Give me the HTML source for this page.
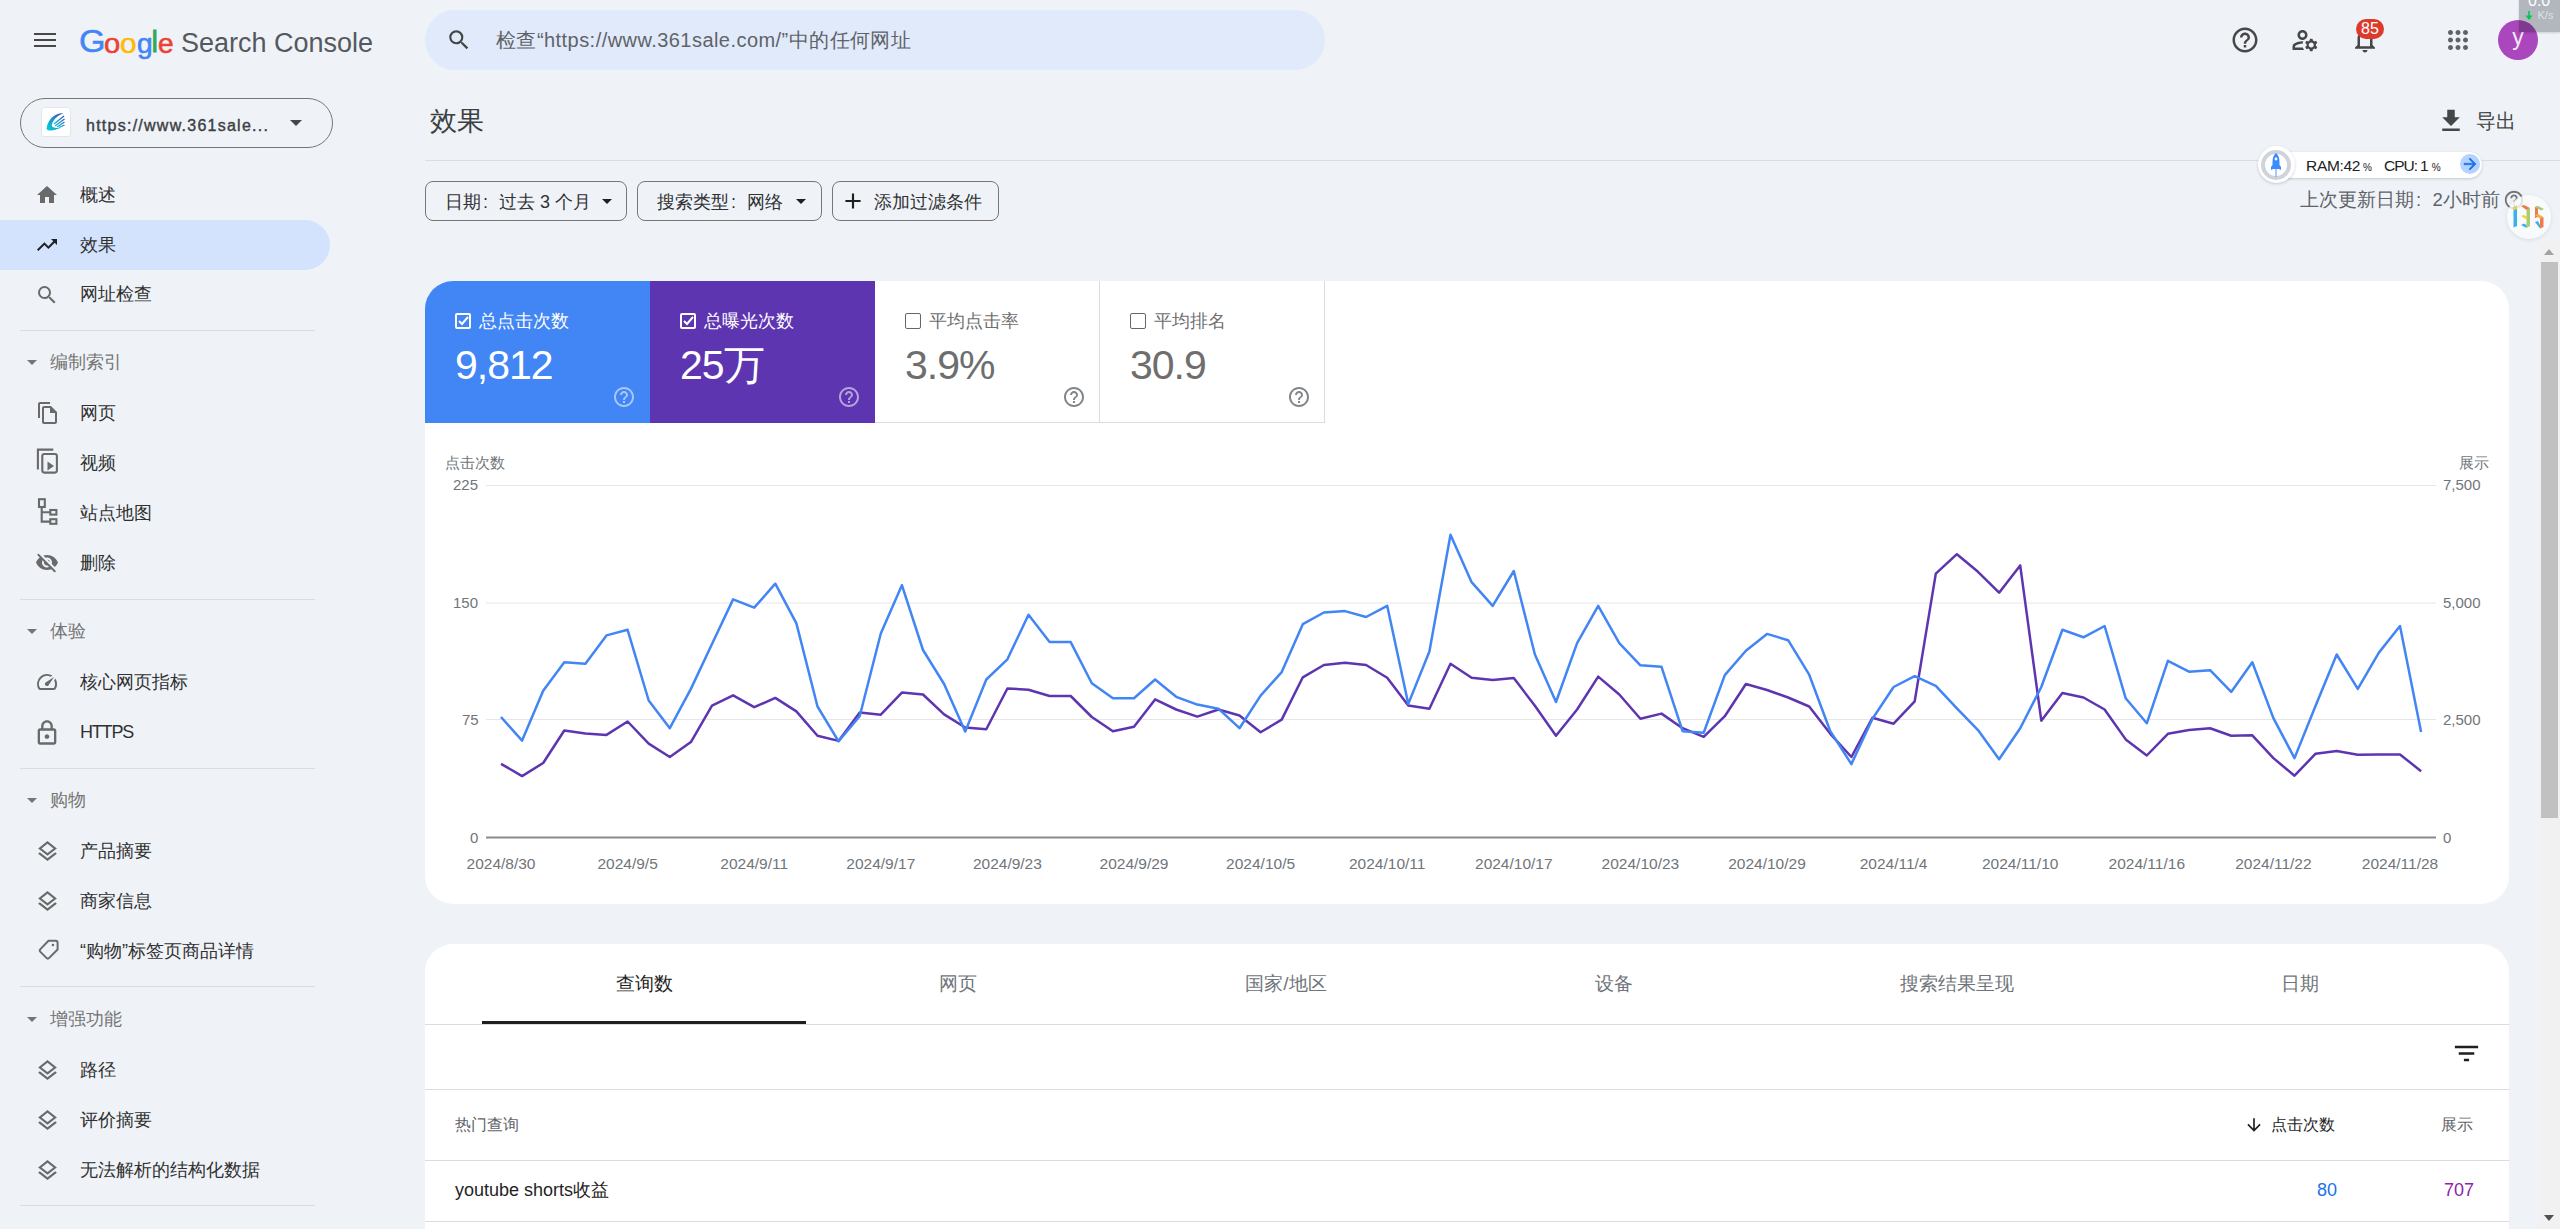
<!DOCTYPE html>
<html><head><meta charset="utf-8">
<style>
*{box-sizing:border-box;margin:0;padding:0}
html,body{width:2560px;height:1229px;overflow:hidden}
body{background:#eff3f8;font-family:"Liberation Sans",sans-serif;color:#1f1f1f;position:relative}
.a{position:absolute;white-space:nowrap}
.nav{position:absolute;left:80px;font-size:18px;color:#303030;line-height:20px}
.ico{position:absolute}
.sec{position:absolute;left:50px;font-size:18px;color:#757575;line-height:20px}
.div{position:absolute;left:20px;width:295px;height:1px;background:#dadce0}
.chip{position:absolute;top:181px;height:40px;border:1px solid #747775;border-radius:8px;font-size:18px;color:#303134;line-height:38px}
.tile{position:absolute;top:281px;width:225px;height:142px}
.tlab{position:absolute;left:54px;top:30px;font-size:18px;line-height:20px}
.tval{position:absolute;left:30px;top:60px;font-size:41px;line-height:48px;letter-spacing:-1px}
.cb{position:absolute;left:30px;top:32px;width:16px;height:16px;border:2px solid #fff;border-radius:2px}
.help{position:absolute;left:187px;top:104px;width:24px;height:24px}
.ylab{position:absolute;font-size:15px;color:#70757a;line-height:16px}
.xlab{position:absolute;top:856px;font-size:15.5px;color:#70757a;line-height:16px;transform:translateX(-50%)}
.tab{position:absolute;top:973px;font-size:19px;color:#70757a;line-height:22px;transform:translateX(-50%)}
</style></head><body>

<!-- header -->
<svg class="ico" style="left:34px;top:32px" width="22" height="16" viewBox="0 0 22 16"><rect x="0" y="1" width="22" height="2" fill="#474747"/><rect x="0" y="7" width="22" height="2" fill="#474747"/><rect x="0" y="13" width="22" height="2" fill="#474747"/></svg>
<div class="a" style="left:78.5px;top:22px;font-size:31px;line-height:40px;transform:scaleX(1.1);transform-origin:0 0;color:#4285f4;-webkit-text-stroke:0.5px #4285f4">G</div><div class="a" style="left:104px;top:24px;font-size:27px;transform:scaleX(1.08);transform-origin:0 0;line-height:40px;color:#ea4335;-webkit-text-stroke:0.6px #ea4335">o</div><div class="a" style="left:120px;top:24px;font-size:27px;transform:scaleX(1.1);transform-origin:0 0;line-height:40px;color:#fbbc05;-webkit-text-stroke:0.6px #fbbc05">o</div><div class="a" style="left:136.5px;top:24px;font-size:27px;transform:scaleX(1.04);transform-origin:0 0;line-height:40px;color:#4285f4;-webkit-text-stroke:0.6px #4285f4">g</div><div class="a" style="left:151.5px;top:22px;font-size:29px;line-height:40px;color:#34a853;-webkit-text-stroke:0.8px #34a853">l</div><div class="a" style="left:158px;top:24px;font-size:27px;transform:scaleX(1.04);transform-origin:0 0;line-height:40px;color:#ea4335;-webkit-text-stroke:0.6px #ea4335">e</div>
<div class="a" style="left:181px;top:23px;font-size:27px;line-height:40px;color:#55595e">Search Console</div>

<div class="a" style="left:425px;top:10px;width:900px;height:60px;border-radius:30px;background:#e1eafb"></div>
<svg class="ico" style="left:446px;top:27px" width="26" height="26" viewBox="0 0 24 24"><path fill="#444746" d="M15.5 14h-.79l-.28-.27A6.47 6.47 0 0 0 16 9.5 6.5 6.5 0 1 0 9.5 16c1.61 0 3.09-.59 4.23-1.57l.27.28v.79l5 4.99L20.49 19l-4.99-5zm-6 0C7.01 14 5 11.99 5 9.5S7.01 5 9.5 5 14 7.01 14 9.5 11.99 14 9.5 14z"/></svg>
<div class="a" style="left:496px;top:29px;font-size:20px;line-height:22px;letter-spacing:0.45px;color:#5f6368">检查“https://www.361sale.com/”中的任何网址</div>

<!-- top right icons -->
<svg class="ico" style="left:2230px;top:25px" width="30" height="30" viewBox="0 0 24 24"><path fill="#474747" d="M11 18h2v-2h-2v2zm1-16C6.48 2 2 6.48 2 12s4.48 10 10 10 10-4.48 10-10S17.52 2 12 2zm0 18c-4.41 0-8-3.59-8-8s3.59-8 8-8 8 3.59 8 8-3.59 8-8 8zm0-14c-2.21 0-4 1.79-4 4h2c0-1.1.9-2 2-2s2 .9 2 2c0 2-3 1.75-3 5h2c0-2.25 3-2.5 3-5 0-2.21-1.79-4-4-4z"/></svg>
<svg class="ico" style="left:2290px;top:25px" width="30" height="30" viewBox="0 0 24 24"><path fill="#474747" d="M4 18v-.65c0-.34.16-.66.41-.81C6.1 15.53 8.03 15 10 15c.03 0 .05 0 .08.01.1-.7.3-1.37.59-1.98-.22-.02-.44-.03-.67-.03-2.42 0-4.68.67-6.61 1.82-.88.52-1.39 1.5-1.39 2.53V20h9.26c-.42-.6-.75-1.28-.97-2H4zM10 12c2.21 0 4-1.79 4-4s-1.79-4-4-4-4 1.79-4 4 1.79 4 4 4zm0-6c1.1 0 2 .9 2 2s-.9 2-2 2-2-.9-2-2 .9-2 2-2zM20.75 16c0-.22-.03-.42-.06-.63l1.14-1.01-1-1.73-1.45.49c-.32-.27-.68-.48-1.08-.63L18 11h-2l-.3 1.49c-.4.15-.76.36-1.08.63l-1.45-.49-1 1.73 1.14 1.01c-.03.21-.06.41-.06.63s.03.42.06.63l-1.14 1.01 1 1.73 1.45-.49c.32.27.68.48 1.08.63L16 21h2l.3-1.49c.4-.15.76-.36 1.08-.63l1.45.49 1-1.73-1.14-1.01c.03-.21.06-.41.06-.63zM17 18c-1.1 0-2-.9-2-2s.9-2 2-2 2 .9 2 2-.9 2-2 2z"/></svg>
<svg class="ico" style="left:2350px;top:25px" width="30" height="30" viewBox="0 0 24 24"><path fill="#474747" d="M12 22c1.1 0 2-.9 2-2h-4c0 1.1.89 2 2 2zm6-6v-5c0-3.07-1.64-5.64-4.5-6.32V4c0-.83-.67-1.5-1.5-1.5s-1.5.67-1.5 1.5v.68C7.63 5.36 6 7.92 6 11v5l-2 2v1h16v-1l-2-2zm-2 1H8v-6c0-2.48 1.51-4.5 4-4.5s4 2.02 4 4.5v6z"/></svg>
<div class="a" style="left:2356px;top:19px;width:28px;height:20px;border-radius:10px;background:#dc3b2c;color:#fff;font-size:16px;line-height:20px;text-align:center">85</div>
<svg class="ico" style="left:2443px;top:25px" width="30" height="30" viewBox="0 0 24 24"><path fill="#5f6368" d="M6 8c1.1 0 2-.9 2-2s-.9-2-2-2-2 .9-2 2 .9 2 2 2zm6 12c1.1 0 2-.9 2-2s-.9-2-2-2-2 .9-2 2 .9 2 2 2zm-6 0c1.1 0 2-.9 2-2s-.9-2-2-2-2 .9-2 2 .9 2 2 2zm0-6c1.1 0 2-.9 2-2s-.9-2-2-2-2 .9-2 2 .9 2 2 2zm6 0c1.1 0 2-.9 2-2s-.9-2-2-2-2 .9-2 2 .9 2 2 2zm6-10c-1.1 0-2 .9-2 2s.9 2 2 2 2-.9 2-2-.9-2-2-2zm-6 4c1.1 0 2-.9 2-2s-.9-2-2-2-2 .9-2 2 .9 2 2 2zm6 6c1.1 0 2-.9 2-2s-.9-2-2-2-2 .9-2 2 .9 2 2 2zm0 6c1.1 0 2-.9 2-2s-.9-2-2-2-2 .9-2 2 .9 2 2 2z"/></svg>
<div class="a" style="left:2498px;top:20px;width:40px;height:40px;border-radius:20px;background:#ab47bc;color:#f4e8f6;font-size:23px;line-height:34px;text-align:center">y</div>
<div class="a" style="left:2519px;top:0;width:41px;height:32px;background:rgba(15,20,30,.27);box-shadow:0 1px 2px rgba(0,0,0,.15)"></div><div class="a" style="left:2528px;top:-7px;font-size:16px;line-height:16px;color:#fff">0.0</div><svg class="ico" style="left:2524.5px;top:11px" width="8" height="9" viewBox="0 0 8 9"><path d="M3.2 0h1.6v4.5h2.7L4 9 0.5 4.5h2.7z" fill="#00c853"/></svg><div class="a" style="left:2537.5px;top:10px;font-size:11px;line-height:11px;color:#dfe1e5">K/s</div>

<!-- sidebar -->
<div class="a" style="left:20px;top:98px;width:313px;height:50px;border:1px solid #747775;border-radius:25px"></div>
<div class="a" style="left:41px;top:107px;width:30px;height:30px;background:#fff;border:1px solid #e6e6e6;border-radius:3px"></div>
<svg class="ico" style="left:41px;top:107px" width="29" height="29" viewBox="0 0 29 29"><defs><linearGradient id="fg" x1="0" y1="1" x2="1" y2="0"><stop offset="0" stop-color="#00d8d8"/><stop offset="1" stop-color="#3a4db8"/></linearGradient></defs><path d="M22.5 6.2 C14 5.5 7 12 5.5 21.5 C5.8 23.8 9 23.8 12 23.2 C15 22.6 17.5 21.8 19.5 20.8 C14.5 21.2 10.5 20.8 10.8 18 C12 12.5 16.5 8.5 22.5 6.2 Z" fill="url(#fg)"/><path d="M13 17 L23 9 M14 19 L23.5 12 M16 20 L23.5 15 M18 20.5 L23.5 18" stroke="url(#fg)" stroke-width="1.3" fill="none"/></svg>
<div class="a" style="left:86px;top:115.5px;font-size:16px;line-height:20px;color:#3c4043;letter-spacing:1.25px;-webkit-text-stroke:0.4px #3c4043">https://www.361sale...</div>
<svg class="ico" style="left:289px;top:119px" width="14" height="8" viewBox="0 0 14 8"><path d="M1 1h12L7 7z" fill="#474747"/></svg>

<div class="a" style="left:0;top:220px;width:330px;height:50px;border-radius:0 25px 25px 0;background:#d3e3fd"></div>

<svg class="ico" style="left:35px;top:183px" width="24" height="24" viewBox="0 0 24 24"><path fill="#6a6a6a" d="M10 20v-6h4v6h5v-8h3L12 3 2 12h3v8z"/></svg>
<div class="nav" style="top:185px">概述</div>
<svg class="ico" style="left:35px;top:233px" width="24" height="24" viewBox="0 0 24 24"><path fill="#1f1f1f" d="M16 6l2.29 2.29-4.88 4.88-4-4L2 16.59 3.41 18l6-6 4 4 6.3-6.29L22 12V6z"/></svg>
<div class="nav" style="top:235px">效果</div>
<svg class="ico" style="left:35px;top:283px" width="24" height="24" viewBox="0 0 24 24"><path fill="#6a6a6a" d="M15.5 14h-.79l-.28-.27A6.47 6.47 0 0 0 16 9.5 6.5 6.5 0 1 0 9.5 16c1.61 0 3.09-.59 4.23-1.57l.27.28v.79l5 4.99L20.49 19l-4.99-5zm-6 0C7.01 14 5 11.99 5 9.5S7.01 5 9.5 5 14 7.01 14 9.5 11.99 14 9.5 14z"/></svg>
<div class="nav" style="top:284px">网址检查</div>
<div class="div" style="top:330px"></div>

<svg class="ico" style="left:26px;top:359px" width="12" height="7" viewBox="0 0 12 7"><path d="M1 1h10L6 6z" fill="#757575"/></svg>
<div class="sec" style="top:352px">编制索引</div>
<svg class="ico" style="left:35px;top:401px" width="24" height="24" viewBox="0 0 24 24"><path fill="#6a6a6a" d="M15 1H5c-1.1 0-2 .9-2 2v14h2V3h10V1zm1 4H9c-1.1 0-2 .9-2 2v14c0 1.1.9 2 2 2h11c1.1 0 2-.9 2-2V11l-6-6zm4 16H9V7h6v5h5v9z"/></svg>
<div class="nav" style="top:403px">网页</div>
<svg class="ico" style="left:35px;top:447px" width="24" height="28" viewBox="0 0 24 28"><path d="M2.9 22.5V2.6H18.3" fill="none" stroke="#6a6a6a" stroke-width="2.1"/><rect x="7.3" y="7" width="14.6" height="18.6" rx="2" fill="none" stroke="#6a6a6a" stroke-width="2.1"/><path d="M12.5 14.5L19 19L12.5 23.5Z" fill="#6a6a6a"/></svg>
<div class="nav" style="top:453px">视频</div>
<svg class="ico" style="left:35px;top:495px" width="24" height="32" viewBox="0 0 24 32"><g fill="none" stroke="#6a6a6a" stroke-width="2.1"><rect x="4" y="4.2" width="5.8" height="7.8"/><rect x="15.3" y="15" width="6.1" height="4.6"/><rect x="15.3" y="24.2" width="6.1" height="4.6"/><path d="M6.7 12V26.6H15.3M6.7 17.3H15.3"/></g></svg>
<div class="nav" style="top:503px">站点地图</div>
<svg class="ico" style="left:35px;top:551px" width="24" height="24" viewBox="0 0 24 24"><path fill="#6a6a6a" d="M12 6.5c2.76 0 5 2.24 5 5 0 .51-.1 1-.24 1.46l3.06 3.06c1.39-1.23 2.49-2.77 3.18-4.53C21.27 7.11 17 4 12 4c-1.27 0-2.49.2-3.64.57l2.17 2.17c.47-.14.96-.24 1.47-.24zM2.71 3.16a.996.996 0 0 0 0 1.41l1.97 1.97A11.892 11.892 0 0 0 1 11.5C2.73 15.89 7 19 12 19c1.52 0 2.97-.3 4.31-.82l2.72 2.72a.996.996 0 1 0 1.41-1.41L4.13 3.16c-.39-.39-1.03-.39-1.42 0zM12 16.5c-2.76 0-5-2.24-5-5 0-.77.18-1.5.49-2.14l1.57 1.57c-.03.18-.06.37-.06.57 0 1.66 1.34 3 3 3 .2 0 .38-.03.57-.07L14.14 16c-.65.32-1.37.5-2.14.5zm2.97-5.33a2.97 2.97 0 0 0-2.64-2.64l2.64 2.64z"/></svg>
<div class="nav" style="top:553px">删除</div>
<div class="div" style="top:599px"></div>

<svg class="ico" style="left:26px;top:628px" width="12" height="7" viewBox="0 0 12 7"><path d="M1 1h10L6 6z" fill="#757575"/></svg>
<div class="sec" style="top:621px">体验</div>
<svg class="ico" style="left:35px;top:670px" width="24" height="24" viewBox="0 0 24 24"><path fill="#6a6a6a" d="M20.38 8.57l-1.23 1.85a8 8 0 0 1-.22 7.58H5.07A8 8 0 0 1 15.58 6.85l1.85-1.23A10 10 0 0 0 3.35 19a2 2 0 0 0 1.72 1h13.85a2 2 0 0 0 1.74-1 10 10 0 0 0-.27-10.44zm-9.79 6.84a2 2 0 0 0 2.83 0l5.66-8.49-8.49 5.66a2 2 0 0 0 0 2.83z"/></svg>
<div class="nav" style="top:672px">核心网页指标</div>
<svg class="ico" style="left:33px;top:719px" width="28" height="28" viewBox="0 0 24 24"><path fill="#6a6a6a" d="M18 8h-1V6c0-2.76-2.24-5-5-5S7 3.24 7 6v2H6c-1.1 0-2 .9-2 2v10c0 1.1.9 2 2 2h12c1.1 0 2-.9 2-2V10c0-1.1-.9-2-2-2zM9 6c0-1.66 1.34-3 3-3s3 1.34 3 3v2H9V6zm9 14H6V10h12v10zm-6-3c1.1 0 2-.9 2-2s-.9-2-2-2-2 .9-2 2 .9 2 2 2z"/></svg>
<div class="nav" style="top:722px;letter-spacing:-1.2px">HTTPS</div>
<div class="div" style="top:768px"></div>

<svg class="ico" style="left:26px;top:797px" width="12" height="7" viewBox="0 0 12 7"><path d="M1 1h10L6 6z" fill="#757575"/></svg>
<div class="sec" style="top:790px">购物</div>
<svg class="ico" style="left:35.4px;top:839px" width="25" height="25" viewBox="0 0 24 24"><path fill="#6a6a6a" d="M11.99 18.54l-7.37-5.73L3 14.07l9 7 9-7-1.63-1.27-7.38 5.74zM12 16l7.36-5.73L21 9l-9-7-9 7 1.63 1.27L12 16zm0-11.47L17.74 9 12 13.47 6.26 9 12 4.53z"/></svg>
<div class="nav" style="top:841px">产品摘要</div>
<svg class="ico" style="left:35.4px;top:889px" width="25" height="25" viewBox="0 0 24 24"><path fill="#6a6a6a" d="M11.99 18.54l-7.37-5.73L3 14.07l9 7 9-7-1.63-1.27-7.38 5.74zM12 16l7.36-5.73L21 9l-9-7-9 7 1.63 1.27L12 16zm0-11.47L17.74 9 12 13.47 6.26 9 12 4.53z"/></svg>
<div class="nav" style="top:891px">商家信息</div>
<svg class="ico" style="left:35px;top:937px" width="24" height="24" viewBox="0 0 24 24"><path d="M13.5 3.8L20.6 3.8Q22.6 3.8 22.6 5.8L22.6 12.5L14.2 20.9Q12.8 22.3 11.4 20.9L5.4 14.9Q4 13.5 5.4 12.1Z" fill="none" stroke="#6a6a6a" stroke-width="2" stroke-linejoin="round"/><circle cx="17.9" cy="8" r="1.3" fill="#6a6a6a"/></svg>
<div class="nav" style="top:941px">“购物”标签页商品详情</div>
<div class="div" style="top:986px"></div>

<svg class="ico" style="left:26px;top:1016px" width="12" height="7" viewBox="0 0 12 7"><path d="M1 1h10L6 6z" fill="#757575"/></svg>
<div class="sec" style="top:1009px">增强功能</div>
<svg class="ico" style="left:35.4px;top:1058px" width="25" height="25" viewBox="0 0 24 24"><path fill="#6a6a6a" d="M11.99 18.54l-7.37-5.73L3 14.07l9 7 9-7-1.63-1.27-7.38 5.74zM12 16l7.36-5.73L21 9l-9-7-9 7 1.63 1.27L12 16zm0-11.47L17.74 9 12 13.47 6.26 9 12 4.53z"/></svg>
<div class="nav" style="top:1060px">路径</div>
<svg class="ico" style="left:35.4px;top:1108px" width="25" height="25" viewBox="0 0 24 24"><path fill="#6a6a6a" d="M11.99 18.54l-7.37-5.73L3 14.07l9 7 9-7-1.63-1.27-7.38 5.74zM12 16l7.36-5.73L21 9l-9-7-9 7 1.63 1.27L12 16zm0-11.47L17.74 9 12 13.47 6.26 9 12 4.53z"/></svg>
<div class="nav" style="top:1110px">评价摘要</div>
<svg class="ico" style="left:35.4px;top:1158px" width="25" height="25" viewBox="0 0 24 24"><path fill="#6a6a6a" d="M11.99 18.54l-7.37-5.73L3 14.07l9 7 9-7-1.63-1.27-7.38 5.74zM12 16l7.36-5.73L21 9l-9-7-9 7 1.63 1.27L12 16zm0-11.47L17.74 9 12 13.47 6.26 9 12 4.53z"/></svg>
<div class="nav" style="top:1160px">无法解析的结构化数据</div>
<div class="div" style="top:1205px"></div>

<!-- main header -->
<div class="a" style="left:430px;top:106px;font-size:27px;line-height:30px;color:#3c4043">效果</div>
<svg class="ico" style="left:2436px;top:106px" width="30" height="30" viewBox="0 0 24 24"><path fill="#444746" d="M19 9h-4V3H9v6H5l7 7 7-7zM5 18v2h14v-2H5z"/></svg>
<div class="a" style="left:2476px;top:110px;font-size:20px;line-height:22px;color:#444746">导出</div>
<div class="a" style="left:425px;top:160px;width:2135px;height:1px;background:#dadce0"></div>

<div class="chip" style="left:425px;width:202px"><span style="position:absolute;left:19px;top:1px">日期<span style="display:inline-block;width:18px;padding-left:2px">:</span>过去 3 个月</span><svg style="position:absolute;left:175px;top:16px" width="12" height="7" viewBox="0 0 12 7"><path d="M1 1h10L6 6z" fill="#1f1f1f"/></svg></div>
<div class="chip" style="left:637px;width:185px"><span style="position:absolute;left:19px;top:1px">搜索类型<span style="display:inline-block;width:18px;padding-left:2px">:</span>网络</span><svg style="position:absolute;left:157px;top:16px" width="12" height="7" viewBox="0 0 12 7"><path d="M1 1h10L6 6z" fill="#1f1f1f"/></svg></div>
<div class="chip" style="left:832px;width:167px"><svg style="position:absolute;left:7px;top:6px" width="26" height="26" viewBox="0 0 24 24"><path fill="#1f1f1f" d="M19 13h-6v6h-2v-6H5v-2h6V5h2v6h6v2z"/></svg><span style="position:absolute;left:41px;top:1px">添加过滤条件</span></div>

<div class="a" style="left:2300px;top:189px;font-size:18.5px;line-height:22px;color:#5f6368">上次更新日期<span style="display:inline-block;width:18.5px;padding-left:2px">:</span>2小时前</div>
<svg class="ico" style="left:2503px;top:189px" width="22" height="22" viewBox="0 0 24 24"><path fill="#757575" d="M11 18h2v-2h-2v2zm1-16C6.48 2 2 6.48 2 12s4.48 10 10 10 10-4.48 10-10S17.52 2 12 2zm0 18c-4.41 0-8-3.59-8-8s3.59-8 8-8 8 3.59 8 8-3.59 8-8 8zm0-14c-2.21 0-4 1.79-4 4h2c0-1.1.9-2 2-2s2 .9 2 2c0 2-3 1.75-3 5h2c0-2.25 3-2.5 3-5 0-2.21-1.79-4-4-4z"/></svg>

<!-- RAM widget -->
<div class="a" style="left:2262px;top:152px;width:220px;height:26px;border-radius:13px;background:#fff;box-shadow:0 1px 3px rgba(0,0,0,.18)"></div>
<div class="a" style="left:2258px;top:146px;width:37px;height:37px;border-radius:19px;background:#fff;box-shadow:0 1px 3px rgba(0,0,0,.18)"></div>
<div class="a" style="left:2262px;top:262px;width:0;height:0"></div>
<div class="a" style="left:2261px;top:149.5px;width:30px;height:30px;border-radius:15px;border:4px solid #cfd3da;background:#fff"></div>
<svg class="ico" style="left:2268px;top:152px" width="16" height="26" viewBox="0 0 16 26"><path d="M8 1 C10.5 3 11.5 6 11.5 10 L11.5 13 L13 15 L13 18 L11 17 L5 17 L3 18 L3 15 L4.5 13 L4.5 10 C4.5 6 5.5 3 8 1Z" fill="#3d8bfd"/><circle cx="8" cy="7" r="1.4" fill="#fff"/><rect x="7.3" y="17" width="1.4" height="8" fill="#7fb2ff"/></svg>
<div class="a" style="left:2306px;top:156.5px;font-size:15.5px;line-height:18px;color:#222;letter-spacing:-0.3px">RAM:42<span style="font-size:10px;letter-spacing:0"> %</span></div>
<div class="a" style="left:2384px;top:156.5px;font-size:15.5px;line-height:18px;color:#222;letter-spacing:-1px">CPU:<span style="margin-left:3px">1</span><span style="font-size:10px;letter-spacing:0;margin-left:4px">%</span></div>
<div class="a" style="left:2460px;top:154px;width:20px;height:20px;border-radius:10px;background:#b6d3ff"></div>
<svg class="ico" style="left:2461px;top:155px" width="18" height="18" viewBox="0 0 24 24"><path fill="#1a73e8" d="M12 4l-1.41 1.41L16.17 11H4v2h12.17l-5.58 5.59L12 20l8-8z" stroke="#1a73e8" stroke-width="0.8"/></svg>

<!-- 135 circle -->
<div class="a" style="left:2507px;top:195px;width:44px;height:44px;border-radius:22px;background:rgba(250,251,253,.8);box-shadow:0 1px 4px rgba(0,0,0,.1)"></div>
<svg class="ico" style="left:2506px;top:194.6px" width="44" height="44" viewBox="0 0 44 44"><path d="M7.5 12 L11 10.5 L11 31 L7.5 32.5Z" fill="#3bb0e8"/><path d="M7.5 12 L11 10.5 L11 14 L7.5 15.5Z" fill="#f4d03f"/><path d="M20.5 15 L24 13 L24 31 L20.5 33Z" fill="#a8cc70"/><path d="M15 11 L18 10 L24 13 L20.5 15Z" fill="#ef7b4a"/><path d="M15 21 L18 20 L21.5 22 L20.5 24.5Z" fill="#f4d03f"/><path d="M15 30 L18 28.5 L20.5 30 L20.5 33Z" fill="#3bb0e8"/><path d="M29 12 L32 11 L32 22 L29 23Z" fill="#ef7b4a"/><path d="M29 12 L32 11 L38 14 L35 15.5Z" fill="#a8cc70"/><path d="M29 20 L32 19 L37.5 22 L34 23.5Z" fill="#f4b040"/><path d="M34 23.5 L37.5 22 L37.5 32 L34 33.5Z" fill="#ef7b4a"/><path d="M29 27 L32 26 L34 30 L34 33.5Z" fill="#3bb0e8"/></svg>

<!-- scrollbar -->
<div class="a" style="left:2539px;top:241px;width:21px;height:988px;background:#f1f1f1"></div>
<div class="a" style="left:2541px;top:262px;width:17px;height:556px;background:#c1c1c1"></div>
<svg class="ico" style="left:2544px;top:249px" width="10" height="6" viewBox="0 0 10 6"><path d="M0 6L5 0 10 6z" fill="#a3a3a3"/></svg>
<svg class="ico" style="left:2544px;top:1215px" width="10" height="6" viewBox="0 0 10 6"><path d="M0 0h10L5 6z" fill="#505050"/></svg>

<!-- chart card -->
<div class="a" style="left:425px;top:281px;width:2084px;height:623px;background:#fff;border-radius:28px;overflow:hidden">
  <div class="tile" style="left:0;top:0;background:#4285f4;color:#fff">
    <div class="cb"></div><svg style="position:absolute;left:33px;top:35px" width="11" height="10" viewBox="0 0 11 10"><path d="M1 5l3 3 6-7" stroke="#fff" stroke-width="2" fill="none"/></svg>
    <div class="tlab">总点击次数</div><div class="tval">9,812</div>
    <svg class="help" viewBox="0 0 24 24"><path fill="rgba(255,255,255,.55)" d="M11 18h2v-2h-2v2zm1-16C6.48 2 2 6.48 2 12s4.48 10 10 10 10-4.48 10-10S17.52 2 12 2zm0 18c-4.41 0-8-3.59-8-8s3.59-8 8-8 8 3.59 8 8-3.59 8-8 8zm0-14c-2.21 0-4 1.79-4 4h2c0-1.1.9-2 2-2s2 .9 2 2c0 2-3 1.75-3 5h2c0-2.25 3-2.5 3-5 0-2.21-1.79-4-4-4z"/></svg>
  </div>
  <div class="tile" style="left:225px;top:0;background:#5e35b1;color:#fff">
    <div class="cb"></div><svg style="position:absolute;left:33px;top:35px" width="11" height="10" viewBox="0 0 11 10"><path d="M1 5l3 3 6-7" stroke="#fff" stroke-width="2" fill="none"/></svg>
    <div class="tlab">总曝光次数</div><div class="tval">25万</div>
    <svg class="help" viewBox="0 0 24 24"><path fill="rgba(255,255,255,.55)" d="M11 18h2v-2h-2v2zm1-16C6.48 2 2 6.48 2 12s4.48 10 10 10 10-4.48 10-10S17.52 2 12 2zm0 18c-4.41 0-8-3.59-8-8s3.59-8 8-8 8 3.59 8 8-3.59 8-8 8zm0-14c-2.21 0-4 1.79-4 4h2c0-1.1.9-2 2-2s2 .9 2 2c0 2-3 1.75-3 5h2c0-2.25 3-2.5 3-5 0-2.21-1.79-4-4-4z"/></svg>
  </div>
  <div class="tile" style="left:450px;top:0;color:#6e6e6e;border-right:1px solid #dadce0;border-bottom:1px solid #dadce0">
    <div class="cb" style="border-color:#666;border-width:1.7px"></div>
    <div class="tlab">平均点击率</div><div class="tval">3.9%</div>
    <svg class="help" viewBox="0 0 24 24"><path fill="#80868b" d="M11 18h2v-2h-2v2zm1-16C6.48 2 2 6.48 2 12s4.48 10 10 10 10-4.48 10-10S17.52 2 12 2zm0 18c-4.41 0-8-3.59-8-8s3.59-8 8-8 8 3.59 8 8-3.59 8-8 8zm0-14c-2.21 0-4 1.79-4 4h2c0-1.1.9-2 2-2s2 .9 2 2c0 2-3 1.75-3 5h2c0-2.25 3-2.5 3-5 0-2.21-1.79-4-4-4z"/></svg>
  </div>
  <div class="tile" style="left:675px;top:0;color:#6e6e6e;border-right:1px solid #dadce0;border-bottom:1px solid #dadce0">
    <div class="cb" style="border-color:#666;border-width:1.7px"></div>
    <div class="tlab">平均排名</div><div class="tval">30.9</div>
    <svg class="help" viewBox="0 0 24 24"><path fill="#80868b" d="M11 18h2v-2h-2v2zm1-16C6.48 2 2 6.48 2 12s4.48 10 10 10 10-4.48 10-10S17.52 2 12 2zm0 18c-4.41 0-8-3.59-8-8s3.59-8 8-8 8 3.59 8 8-3.59 8-8 8zm0-14c-2.21 0-4 1.79-4 4h2c0-1.1.9-2 2-2s2 .9 2 2c0 2-3 1.75-3 5h2c0-2.25 3-2.5 3-5 0-2.21-1.79-4-4-4z"/></svg>
  </div>
</div>

<!-- chart -->
<div class="ylab" style="left:445px;top:455px">点击次数</div>
<div class="ylab" style="left:2459px;top:455px">展示</div>
<div class="ylab" style="left:453px;top:477px">225</div>
<div class="ylab" style="left:453px;top:595px">150</div>
<div class="ylab" style="left:462px;top:712px">75</div>
<div class="ylab" style="left:470px;top:830px">0</div>
<div class="ylab" style="left:2443px;top:477px">7,500</div>
<div class="ylab" style="left:2443px;top:595px">5,000</div>
<div class="ylab" style="left:2443px;top:712px">2,500</div>
<div class="ylab" style="left:2443px;top:830px">0</div>
<svg class="ico" style="left:0;top:0" width="2560" height="1229">
  <line x1="486" y1="485.5" x2="2436" y2="485.5" stroke="#e6e6e6" stroke-width="1"/>
  <line x1="486" y1="603" x2="2436" y2="603" stroke="#e6e6e6" stroke-width="1"/>
  <line x1="486" y1="719.5" x2="2436" y2="719.5" stroke="#e6e6e6" stroke-width="1"/>
  <line x1="486" y1="837.5" x2="2436" y2="837.5" stroke="#8a8a8a" stroke-width="2"/>
  <polyline points="501.0,763.8 522.1,776.1 543.2,763.0 564.3,730.5 585.4,733.4 606.5,734.9 627.6,721.5 648.7,743.6 669.8,757.0 690.9,742.1 712.0,705.7 733.1,695.3 754.2,707.2 775.3,697.9 796.4,711.4 817.5,735.7 838.6,740.9 859.7,712.5 880.8,714.7 901.9,692.6 923.0,694.5 944.1,714.4 965.2,727.5 986.3,729.3 1007.4,688.5 1028.5,689.7 1049.6,696.0 1070.7,696.0 1091.8,717.0 1112.9,731.2 1134.0,726.7 1155.1,699.4 1176.2,709.5 1197.3,716.6 1218.4,709.5 1239.5,715.5 1260.6,732.3 1281.7,719.6 1302.8,677.3 1323.9,665.0 1345.0,662.7 1366.1,665.0 1387.2,677.7 1408.3,705.4 1429.4,708.7 1450.5,663.8 1471.6,677.7 1492.7,679.9 1513.8,678.1 1534.9,705.7 1556.0,735.7 1577.1,709.5 1598.2,676.6 1619.3,694.5 1640.4,718.8 1661.5,713.6 1682.6,728.2 1703.7,736.8 1724.8,716.2 1745.9,684.0 1767.0,690.0 1788.1,697.5 1809.2,706.5 1830.3,733.8 1851.4,757.0 1872.5,717.7 1893.6,723.7 1914.7,701.3 1935.8,573.6 1956.9,554.2 1978.0,571.8 1999.1,592.7 2020.2,565.4 2041.3,720.7 2062.4,693.0 2083.5,697.5 2104.6,709.5 2125.7,739.4 2146.8,755.5 2167.9,733.8 2189.0,730.1 2210.1,728.2 2231.2,735.7 2252.3,735.3 2273.4,758.1 2294.5,775.7 2315.6,753.7 2336.7,751.0 2357.8,754.8 2378.9,754.4 2400.0,754.4 2421.1,771.2" fill="none" stroke="#5e35b1" stroke-width="2.5" stroke-linejoin="round"/>
  <polyline points="501.0,717.0 522.1,740.6 543.2,690.8 564.3,662.3 585.4,663.8 606.5,635.4 627.6,629.8 648.7,700.5 669.8,728.2 690.9,688.9 712.0,644.0 733.1,599.4 754.2,607.7 775.3,583.7 796.4,623.4 817.5,706.5 838.6,741.3 859.7,716.2 880.8,633.5 901.9,585.2 923.0,650.0 944.1,684.0 965.2,731.6 986.3,679.5 1007.4,659.3 1028.5,614.8 1049.6,642.1 1070.7,642.1 1091.8,683.3 1112.9,698.3 1134.0,698.3 1155.1,679.5 1176.2,696.8 1197.3,704.6 1218.4,708.7 1239.5,728.2 1260.6,695.6 1281.7,672.1 1302.8,624.2 1323.9,612.5 1345.0,611.1 1366.1,617.0 1387.2,605.8 1408.3,703.9 1429.4,651.5 1450.5,534.7 1471.6,582.2 1492.7,605.8 1513.8,571.0 1534.9,654.5 1556.0,702.0 1577.1,643.2 1598.2,605.8 1619.3,643.2 1640.4,665.3 1661.5,666.8 1682.6,731.2 1703.7,732.7 1724.8,675.1 1745.9,650.7 1767.0,633.9 1788.1,640.2 1809.2,674.7 1830.3,731.2 1851.4,764.1 1872.5,718.8 1893.6,687.0 1914.7,676.2 1935.8,685.9 1956.9,708.4 1978.0,730.1 1999.1,759.3 2020.2,728.2 2041.3,687.0 2062.4,629.8 2083.5,637.3 2104.6,626.0 2125.7,698.3 2146.8,723.3 2167.9,660.8 2189.0,671.7 2210.1,670.2 2231.2,691.9 2252.3,662.3 2273.4,718.1 2294.5,758.1 2315.6,705.7 2336.7,654.5 2357.8,688.9 2378.9,652.6 2400.0,626.0 2421.1,731.9" fill="none" stroke="#4285f4" stroke-width="2.5" stroke-linejoin="round"/>
</svg>
<div class="xlab" style="left:501px">2024/8/30</div>
<div class="xlab" style="left:627.6px">2024/9/5</div>
<div class="xlab" style="left:754.2px">2024/9/11</div>
<div class="xlab" style="left:880.8px">2024/9/17</div>
<div class="xlab" style="left:1007.4px">2024/9/23</div>
<div class="xlab" style="left:1134px">2024/9/29</div>
<div class="xlab" style="left:1260.6px">2024/10/5</div>
<div class="xlab" style="left:1387.2px">2024/10/11</div>
<div class="xlab" style="left:1513.8px">2024/10/17</div>
<div class="xlab" style="left:1640.4px">2024/10/23</div>
<div class="xlab" style="left:1767px">2024/10/29</div>
<div class="xlab" style="left:1893.6px">2024/11/4</div>
<div class="xlab" style="left:2020.2px">2024/11/10</div>
<div class="xlab" style="left:2146.8px">2024/11/16</div>
<div class="xlab" style="left:2273.4px">2024/11/22</div>
<div class="xlab" style="left:2400px">2024/11/28</div>

<!-- table card -->
<div class="a" style="left:425px;top:944px;width:2084px;height:300px;background:#fff;border-radius:28px 28px 0 0"></div>
<div class="tab" style="left:644px;color:#1f1f1f">查询数</div>
<div class="tab" style="left:958px">网页</div>
<div class="tab" style="left:1286px">国家/地区</div>
<div class="tab" style="left:1614px">设备</div>
<div class="tab" style="left:1957px">搜索结果呈现</div>
<div class="tab" style="left:2300px">日期</div>
<div class="a" style="left:482px;top:1021px;width:324px;height:3px;background:#1f1f1f"></div>
<div class="a" style="left:425px;top:1024px;width:2084px;height:1px;background:#dadce0"></div>
<svg class="ico" style="left:2451px;top:1038px" width="31" height="31" viewBox="0 0 24 24"><path fill="#1f1f1f" d="M10 18h4v-2h-4v2zM3 6v2h18V6H3zm3 7h12v-2H6v2z"/></svg>
<div class="a" style="left:425px;top:1089px;width:2084px;height:1px;background:#dadce0"></div>
<div class="a" style="left:455px;top:1116px;font-size:16px;line-height:18px;color:#5f6368">热门查询</div>
<svg class="ico" style="left:2244px;top:1115px" width="20" height="20" viewBox="0 0 24 24"><path fill="#1f1f1f" d="M20 12l-1.41-1.41L13 16.17V4h-2v12.17l-5.58-5.59L4 12l8 8 8-8z"/></svg>
<div class="a" style="left:2271px;top:1116px;font-size:16px;line-height:18px;color:#1f1f1f">点击次数</div>
<div class="a" style="left:2441px;top:1116px;font-size:16px;line-height:18px;color:#5f6368">展示</div>
<div class="a" style="left:425px;top:1160px;width:2084px;height:1px;background:#dadce0"></div>
<div class="a" style="left:455px;top:1180px;font-size:18px;line-height:20px;color:#1f1f1f">youtube shorts收益</div>
<div class="a" style="left:2317px;top:1180px;font-size:18px;line-height:20px;color:#1a73e8">80</div>
<div class="a" style="left:2444px;top:1180px;font-size:18px;line-height:20px;color:#8e24aa">707</div>
<div class="a" style="left:425px;top:1221px;width:2084px;height:1px;background:#dadce0"></div>

</body></html>
